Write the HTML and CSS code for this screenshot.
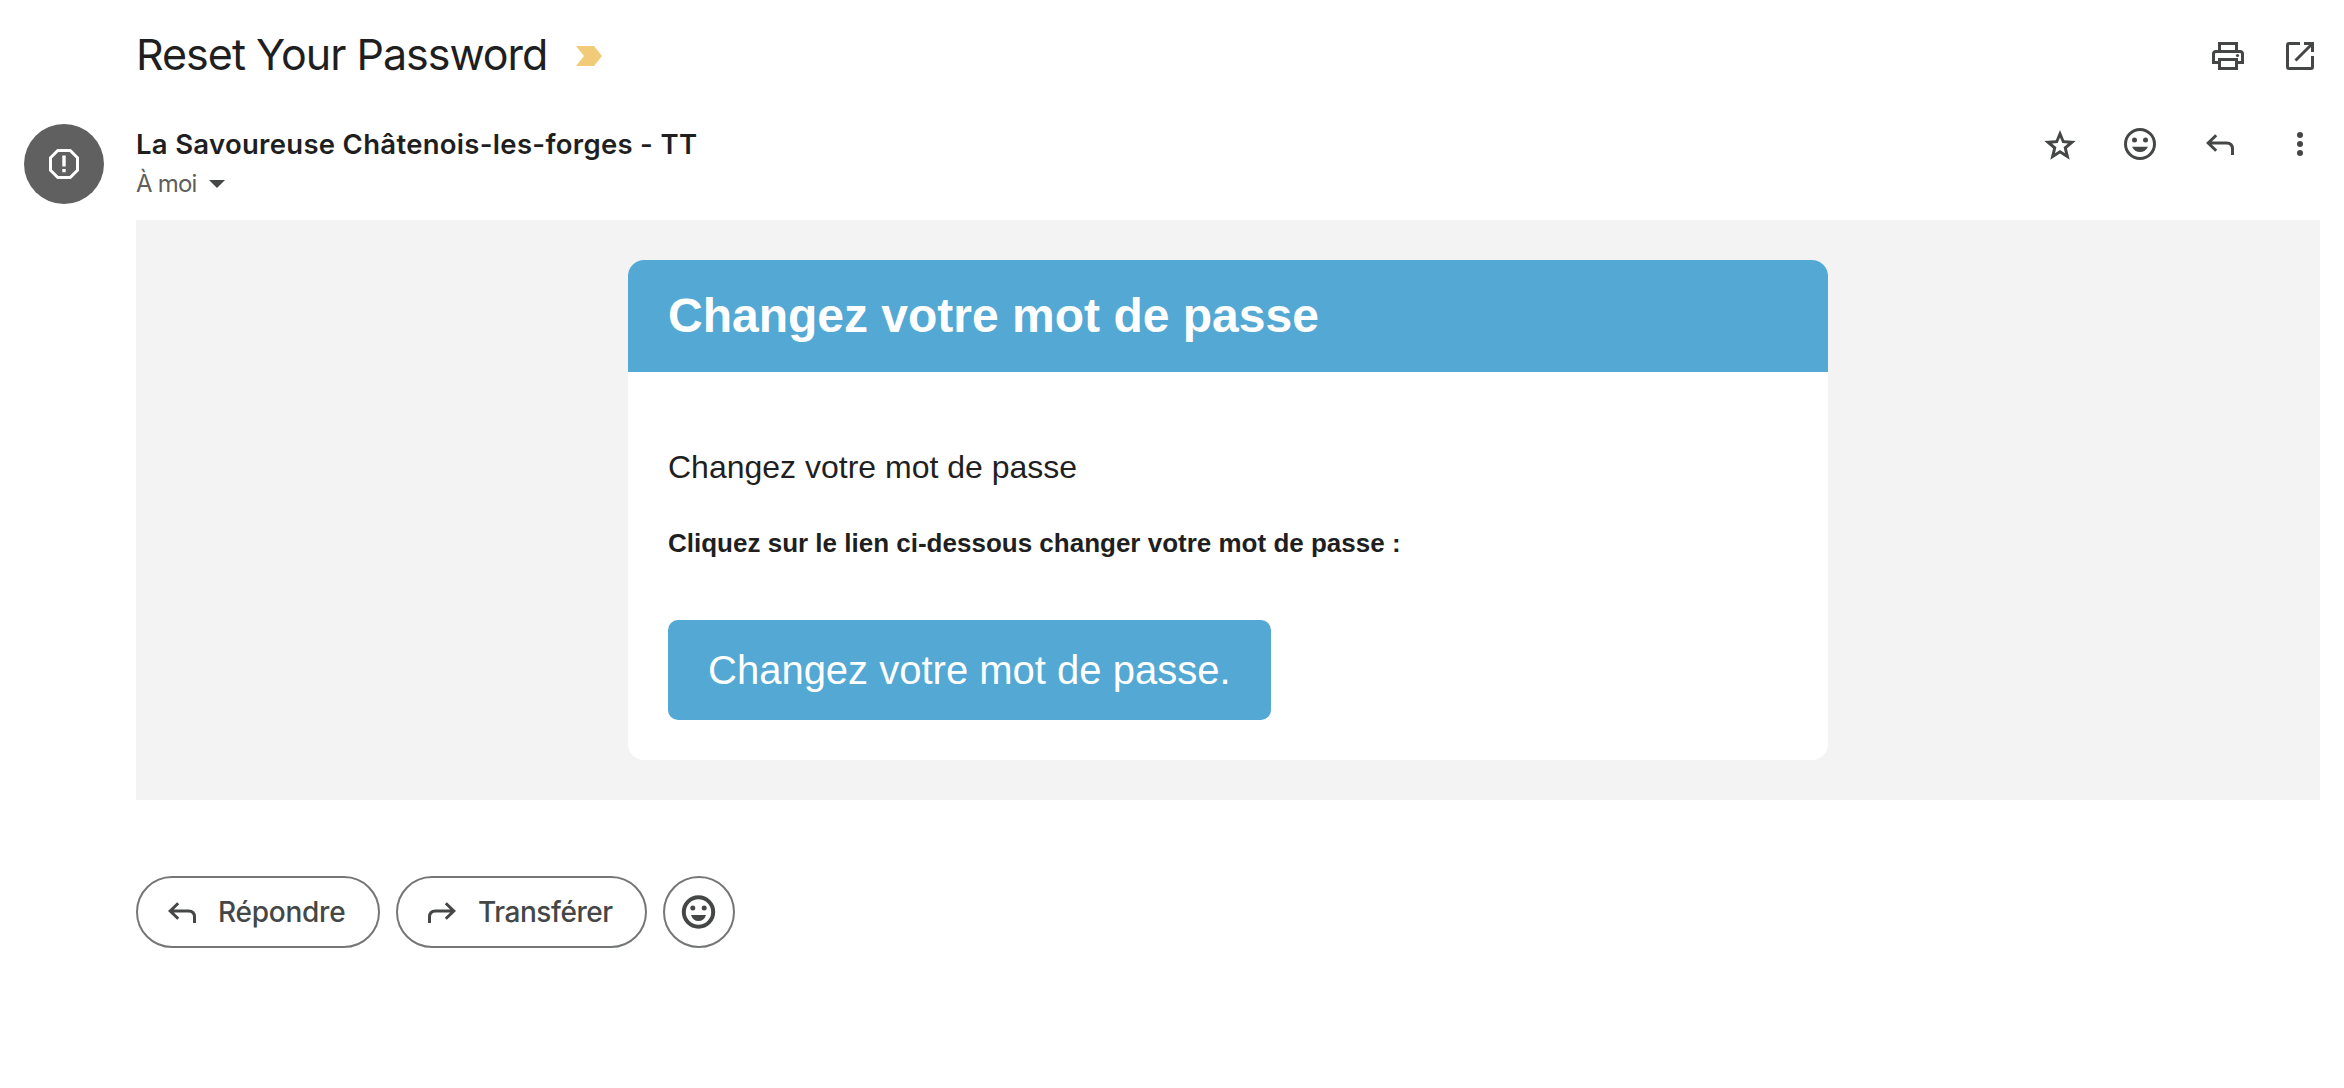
FILE: index.html
```html
<!DOCTYPE html>
<html lang="fr">
<head>
<meta charset="utf-8">
<title>Reset Your Password</title>
<link rel="stylesheet" href="styles.css">
</head>
<body>
<svg class="defs" width="0" height="0" aria-hidden="true">
  <symbol id="reply" viewBox="0 0 40 40"><path d="M16.2 11.2 8.2 19 16.2 26.8M8.5 19H26.5Q32.5 19 32.5 25V31" fill="none" stroke="currentColor" stroke-width="3"/></symbol>
  <symbol id="smile" viewBox="0 0 40 40"><circle cx="20" cy="20" r="14.5" fill="none" stroke="currentColor" stroke-width="3"/><circle cx="14.5" cy="16" r="2.5" fill="currentColor"/><circle cx="25.5" cy="16" r="2.5" fill="currentColor"/><path d="M12 22.8H28Q25.5 28 20 28T12 22.8Z" fill="currentColor"/></symbol>
</svg>
<main class="mail">
  <header class="subject">
    <h1 class="subject-text">Reset Your Password</h1>
    <svg class="marker" viewBox="0 0 26 20"><path d="M0 0H18L26 10 18 20H0L8 10Z" fill="#f1cb78"/></svg>
    <div class="subject-tools">
      <svg class="icon" viewBox="0 0 40 40"><g fill="none" stroke="currentColor" stroke-width="3"><path d="M11.5 15V7.500H28.500V15M11.500 26.500H5.500V18Q5.500 15.500 8 15.500H32Q34.500 15.500 34.500 18V26.500H28.500"/><path d="M11.500 23.500H28.500V32.500H11.500Z"/></g><circle cx="29.500" cy="19.500" r="1.600" fill="currentColor"/></svg>
      <svg class="icon" viewBox="0 0 40 40"><g fill="none" stroke="currentColor" stroke-width="3"><path d="M20 7.500H9Q7.500 7.500 7.500 9V31Q7.500 32.500 9 32.500H31Q32.500 32.500 32.500 31V20M24 7.500H32.500V16M32 8 15.500 24.500"/></g></svg>
    </div>
  </header>
  <section class="sender">
    <div class="avatar"><svg class="icon" viewBox="0 0 40 40"><path d="M13.800 6.500H26.200L33.500 13.800V26.200L26.200 33.500H13.800L6.500 26.200V13.800Z" fill="none" stroke="#fff" stroke-width="3"/><path d="M18.300 11.500H21.700V22.500H18.300ZM18.300 25H21.700V28.200H18.300Z" fill="#fff"/></svg></div>
    <div class="sender-info">
      <div class="sender-name">La Savoureuse Châtenois-les-forges - TT</div>
      <div class="recipient"><span class="recipient-text">À moi</span><svg class="caret" viewBox="0 0 16 8"><path d="M0 0H16L8 8Z" fill="#444746"/></svg></div>
    </div>
    <div class="sender-tools">
      <svg class="icon" viewBox="0 0 40 40"><path d="M20 6 24.200 16.200 35.700 17 26.900 24.400 29.700 35.700 20 29.600 10.300 35.700 13.100 24.400 4.300 17 15.800 16.200ZM20 13.500 17.700 19 12 19.500 16.400 23.200 15 29.200 20 26.100 25 29.200 23.600 23.200 28 19.500 22.300 19Z" fill="currentColor" fill-rule="evenodd"/></svg>
      <svg class="icon"><use href="#smile"/></svg>
      <svg class="icon"><use href="#reply"/></svg>
      <svg class="icon" viewBox="0 0 40 40"><g fill="currentColor"><circle cx="20" cy="11" r="3"/><circle cx="20" cy="20" r="3"/><circle cx="20" cy="29" r="3"/></g></svg>
    </div>
  </section>
  <section class="message">
    <article class="card">
      <h2 class="card-title">Changez votre mot de passe</h2>
      <div class="card-body">
        <p class="lead">Changez votre mot de passe</p>
        <p class="hint">Cliquez sur le lien ci-dessous changer votre mot de passe :</p>
        <a class="cta">Changez votre mot de passe.</a>
      </div>
    </article>
  </section>
  <footer class="actions">
    <button class="pill reply"><svg class="icon"><use href="#reply"/></svg><span class="reply-label">Répondre</span></button>
    <button class="pill forward"><svg class="icon flip"><use href="#reply"/></svg><span class="forward-label">Transférer</span></button>
    <button class="pill react"><svg class="icon" viewBox="0 0 40 40"><circle cx="19.500" cy="20" r="14.700" fill="none" stroke="currentColor" stroke-width="4"/><circle cx="13.800" cy="16" r="2.500" fill="currentColor"/><circle cx="25.200" cy="16" r="2.500" fill="currentColor"/><path d="M12 23H27Q25 29 19.500 29T12 23Z" fill="currentColor"/></svg></button>
  </footer>
</main>
</body>
</html>
```

FILE: styles.css
```css
* { box-sizing: border-box; }
body { margin: 0; background: #fff; color: #1f1f1f; font-family: Inter, "Noto Sans", sans-serif; }
h1, h2, p { margin: 0; font-weight: 400; }
.defs { display: block; position: absolute; }
.mail { padding: 24px 24px 0; }
.icon { display: block; width: 40px; height: 40px; flex: none; color: #444746; }

.subject { display: flex; align-items: center; height: 64px; padding-left: 112px; }
.subject-text { height: 64px; font-size: 43px; line-height: 61px; letter-spacing: -1px; white-space: nowrap; width: 440px; }
.marker { width: 26px; height: 20px; }
.subject-tools { display: flex; gap: 32px; margin-left: auto; }

.sender { display: flex; height: 132px; padding-top: 36px; }
.avatar { display: flex; align-items: center; justify-content: center; width: 80px; height: 80px; margin-right: 32px; border-radius: 50%; background: #606060; }
.sender-name { height: 40px; font-size: 27.500px; font-weight: 600; line-height: 40px; letter-spacing: .3px; white-space: nowrap; }
.recipient { display: flex; align-items: center; height: 40px; color: #5e5e5e; }
.recipient-text { width: 73px; font-size: 24px; line-height: 40px; letter-spacing: -.8px; white-space: nowrap; }
.caret { width: 16px; height: 8px; }
.sender-tools { display: flex; gap: 40px; margin-left: auto; }

.message { margin-left: 112px; padding: 40px 0; background: #f3f3f3; }
.card { width: 1200px; height: 500px; margin: 0 auto; border-radius: 16px; overflow: hidden; background: #fff; font-family: "Liberation Sans", Arial, sans-serif; }
.card-title { height: 112px; padding-left: 40px; background: #54a8d4; color: #fff; font-size: 48px; font-weight: 700; line-height: 112px; }
.card-body { padding: 75px 40px 0; }
.lead { font-size: 32px; line-height: 40px; }
.hint { margin-top: 38px; font-size: 26px; font-weight: 700; line-height: 36px; }
.cta { display: block; width: 603px; height: 100px; margin-top: 59px; padding-left: 40px; border-radius: 10px; background: #54a8d4; color: #fff; font-size: 40px; line-height: 100px; white-space: nowrap; }

.actions { display: flex; gap: 16px; margin: 76px 0 0 112px; }
.pill { display: flex; align-items: center; gap: 16px; height: 72px; padding: 0 0 0 24px; border: 2px solid #747775; border-radius: 36px; background: #fff; color: #444746; font: 500 28px/40px Inter, sans-serif; }
.reply { width: 244px; }
.reply-label { letter-spacing: -.25px; }
.forward { width: 251px; }
.forward-label { letter-spacing: -.45px; }
.react { width: 72px; padding: 0; justify-content: center; }
.flip { transform: scaleX(-1); }
```
